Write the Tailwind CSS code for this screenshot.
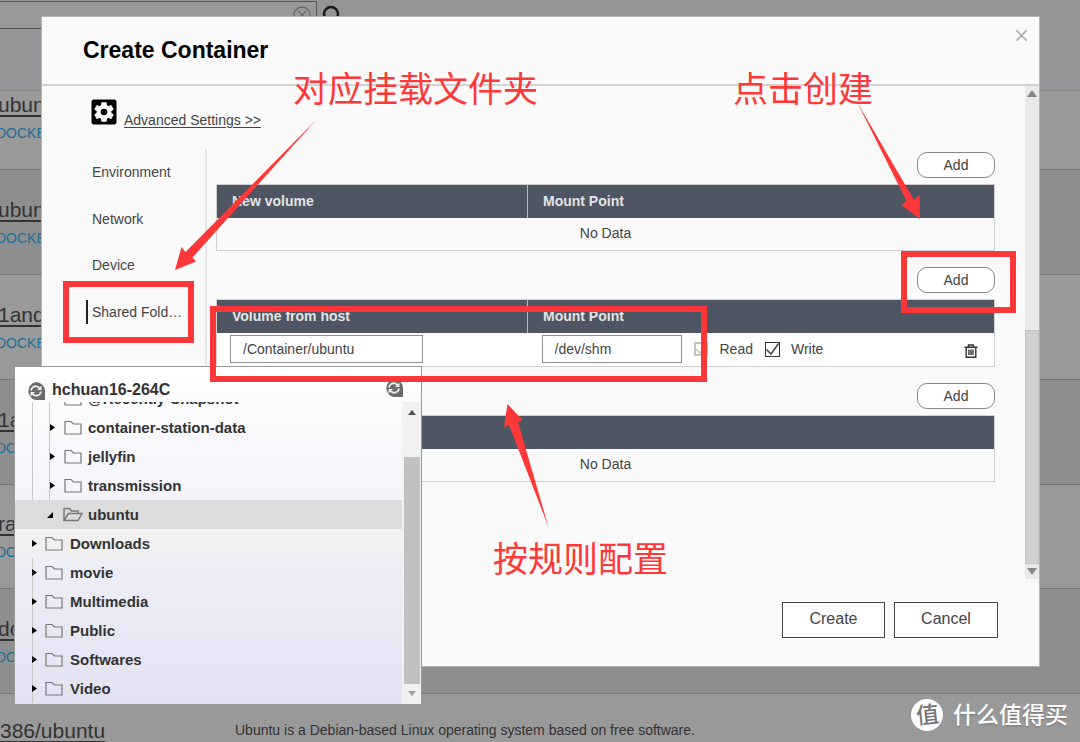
<!DOCTYPE html>
<html lang="en">
<head>
<meta charset="utf-8">
<meta name="viewport" content="width=device-width, initial-scale=1">
<title>Create Container</title>
<script src="https://cdn.jsdelivr.net/npm/@tailwindcss/browser@4"></script>
</head>
<body class="bg-[#999999] font-['Liberation_Sans','Noto_Sans_CJK_SC',sans-serif] text-sm text-[#444444]">
<svg class="hidden" aria-hidden="true">
  <symbol id="folder" viewBox="0 0 18 15"><path d="M1 1.500h6l2.500 2.500H17v10H1z" fill="none" stroke="#777" stroke-width="1.200"/></symbol>
  <symbol id="folder-open" viewBox="0 0 20 15"><path d="M1 13.500V1.500h5.500l2 2.500H15v2.500M1 13.500l4.500-7H19l-4 7z" fill="none" stroke="#777" stroke-width="1.400"/></symbol>
  <symbol id="refresh" viewBox="0 0 18 18"><path d="M9 0a9 9 0 0 1 9 9v9h-6A9 9 0 1 1 9 0z" fill="#6b6b6b"/><path d="M4 8.500C4.500 5.500 7 4 9.500 4.300c1.500.2 2.500.9 3.300 2M14 9.500c-.5 3-3 4.500-5.500 4.200-1.500-.2-2.500-.9-3.300-2" fill="none" stroke="#eee" stroke-width="1.800"/><path d="M14.500 3.500v4.500h-4.500zM3.500 14.500V10H8z" fill="#eee"/></symbol>
</svg>

<div class="relative h-screen overflow-hidden">
  <!-- Image list behind the dialog -->
  <main>
    <header class="flex h-[90px] items-start bg-[#959597]">
      <div class="mt-px flex h-7 w-[317px] items-center border border-l-0 border-[#555] bg-[#999] pr-1">
        <input type="search" aria-label="Search images" class="min-w-0 flex-1 bg-transparent outline-none">
        <button type="button" aria-label="Clear search"><svg class="size-5" viewBox="0 0 20 20" fill="none" stroke="#666" stroke-width="1.300"><circle cx="10" cy="10" r="8"/><path d="M6 6l8 8M14 6l-8 8"/></svg></button>
      </div>
      <button type="button" aria-label="Search" class="mt-1 ml-1"><svg class="size-6" viewBox="0 0 24 24" fill="none" stroke="#1a1a1a" stroke-width="2.500"><circle cx="10" cy="10" r="7"/><path d="M15 15l6 6"/></svg></button>
    </header>
    <ul class="text-[#333]">
      <li class="flex h-[79px] flex-col items-start justify-end gap-2 border-t border-[#868686] bg-[#999] pb-[26px]"><a href="#" class="-ml-0.5 text-[21px] leading-5 underline underline-offset-3">ubun</a><span class="-ml-1 leading-5 text-[#1c6f96]">DOCKE</span></li>
      <li class="flex h-[105px] flex-col items-start justify-end gap-2 border-t border-[#777] bg-[#8e8e8e] pb-[26px]"><a href="#" class="-ml-0.5 text-[21px] leading-5 underline underline-offset-3">ubun</a><span class="-ml-1 leading-5 text-[#1c6f96]">DOCKE</span></li>
      <li class="flex h-[105px] flex-col items-start justify-end gap-2 border-t border-[#777] bg-[#999] pb-[26px]"><a href="#" class="-ml-0.5 text-[21px] leading-5 underline underline-offset-3">1and</a><span class="-ml-1 leading-5 text-[#1c6f96]">DOCKE</span></li>
      <li class="flex h-[105px] flex-col items-start justify-end gap-2 border-t border-[#777] bg-[#8e8e8e] pb-[26px]"><a href="#" class="-ml-0.5 text-[21px] leading-5 underline underline-offset-3">1a</a><span class="-ml-1 leading-5 text-[#1c6f96]">DO</span></li>
      <li class="flex h-[104px] flex-col items-start justify-end gap-2 border-t border-[#777] bg-[#999] pb-[26px]"><a href="#" class="-ml-0.5 text-[21px] leading-5 underline underline-offset-3">ra</a><span class="-ml-1 leading-5 text-[#1c6f96]">DO</span></li>
      <li class="flex h-[105px] flex-col items-start justify-end gap-2 border-t border-[#777] bg-[#8e8e8e] pb-[26px]"><a href="#" class="-ml-0.5 text-[21px] leading-5 underline underline-offset-3">do</a><span class="-ml-1 leading-5 text-[#1c6f96]">DO</span></li>
      <li class="flex h-[105px] items-start border-t border-[#777] bg-[#999] pt-6"><a href="#" class="w-[235px] shrink-0 pt-px text-[21px] leading-6 underline underline-offset-3">386/ubuntu</a><p class="leading-6">Ubuntu is a Debian-based Linux operating system based on free software.</p></li>
    </ul>
  </main>

  <!-- Dialog -->
  <section role="dialog" aria-labelledby="dialog-title" class="absolute top-4 right-10 left-[41px] border border-[#b4b4b4] bg-[#fafafa]">
    <header class="flex items-start justify-between border-b-2 border-[#d3d3d3] pt-3.5 pr-[11px] pb-[15px] pl-[41px]">
      <h1 id="dialog-title" class="text-[23px] leading-[38px] font-bold text-black">Create Container</h1>
      <button type="button" aria-label="Close" class="-mt-3.5 pt-3"><svg class="size-[13px]" viewBox="0 0 14 14" fill="none" stroke="#b0b0b0" stroke-width="2"><path d="M1.500 1.500l11 11M12.500 1.500l-11 11"/></svg></button>
    </header>

    <div class="flex">
      <div class="min-w-0 flex-1 pt-[13px] pr-[30px] pb-[97px] pl-[50px]">
        <a href="#" class="flex items-end gap-[7px] text-[#444]">
          <svg class="-ml-px size-[26px]" viewBox="0 0 26 26"><rect x=".5" y=".5" width="25" height="25" rx="2" fill="#000"/><g fill="#fff"><circle cx="13" cy="13" r="7.500"/><g><rect x="10.200" y="3.200" width="5.600" height="19.600" rx="1"/><rect x="10.200" y="3.200" width="5.600" height="19.600" rx="1" transform="rotate(60 13 13)"/><rect x="10.200" y="3.200" width="5.600" height="19.600" rx="1" transform="rotate(120 13 13)"/></g></g><circle cx="13" cy="13" r="3.300" fill="#000"/></svg>
          <span class="-mb-[5px] leading-5 underline underline-offset-2">Advanced Settings &gt;&gt;</span>
        </a>
        <div class="mt-6 flex gap-[9px]">
          <nav class="w-[115px] shrink-0 border-r-2 border-[#e6e6e6]">
            <ul>
              <li class="flex h-[46px] items-center"><a href="#">Environment</a></li>
              <li class="flex h-[47px] items-center"><a href="#">Network</a></li>
              <li class="flex h-[46px] items-center"><a href="#">Device</a></li>
              <li class="flex h-[47px] items-center"><a href="#" class="-ml-1.5 border-l-2 border-[#222] pl-1 leading-6">Shared Fold…</a></li>
            </ul>
          </nav>
          <div class="flex min-w-0 flex-1 flex-col gap-4 pt-[3px]">
            <section class="flex flex-col gap-1.5">
              <button type="button" class="h-[26px] w-[78px] self-end rounded-[10px] border border-[#888] bg-white">Add</button>
              <table class="w-full table-fixed border-collapse border border-[#d0d0d0]">
                <thead class="bg-[#4e5563] text-left text-[#e4e4e4]"><tr class="h-[33px]"><th class="w-[311px] border-r border-[#bbb] pl-[15px]">New volume</th><th class="pl-[15px]">Mount Point</th></tr></thead>
                <tbody><tr class="h-[33px]"><td colspan="2" class="pb-0.5 text-center">No Data</td></tr></tbody>
              </table>
            </section>
            <section class="flex flex-col gap-1.5">
              <button type="button" class="h-[26px] w-[78px] self-end rounded-[10px] border border-[#888] bg-white">Add</button>
              <table class="w-full table-fixed border-collapse border border-[#d0d0d0]">
                <thead class="bg-[#4e5563] text-left text-[#e4e4e4]"><tr class="h-[33px]"><th class="w-[311px] border-r border-[#bbb] pl-[15px]">Volume from host</th><th class="pl-[15px]">Mount Point</th></tr></thead>
                <tbody class="bg-white"><tr class="h-[34px]">
                  <td class="pl-[13px]"><input type="text" aria-label="Volume from host" value="/Container/ubuntu" class="h-7 w-[193px] border border-[#8f8f8f] bg-white px-3"></td>
                  <td class="pl-[14px]"><div class="flex items-center">
                    <input type="text" aria-label="Mount Point" value="/dev/shm" class="h-7 w-[140px] border border-[#8f8f8f] bg-white px-3">
                    <label class="relative ml-3 flex items-center gap-3"><input type="checkbox" checked disabled class="size-[14px] appearance-none border-2 border-[#c4c4c4]"><svg class="absolute left-0 size-[14px]" viewBox="0 0 14 14" fill="none" stroke="#c4c4c4" stroke-width="1.500"><path d="M2 7l4 4 7-9"/></svg>Read</label>
                    <label class="relative ml-3 flex items-center gap-[11px]"><input type="checkbox" checked class="size-[15px] appearance-none border border-[#333]"><svg class="absolute left-0 size-[15px]" viewBox="0 0 15 15" fill="none" stroke="#444" stroke-width="1.500"><path d="M1.500 7.500l4.500 4.500 7.500-10.500"/></svg>Write</label>
                    <button type="button" aria-label="Delete" class="mr-4 ml-auto pt-1"><svg class="size-[14px]" viewBox="0 0 14 14" fill="none" stroke="#333" stroke-width="1.400"><path d="M.5 3.200h13M4.500 3V1h5v2M2.200 3.500v9.700h9.600V3.500M5 5.500v5.500M7 5.500v5.500M9 5.500v5.500"/></svg></button>
                  </div></td>
                </tr></tbody>
              </table>
            </section>
            <section class="flex flex-col gap-1.5">
              <button type="button" class="h-[26px] w-[78px] self-end rounded-[10px] border border-[#888] bg-white">Add</button>
              <table class="w-full table-fixed border-collapse border border-[#d0d0d0]">
                <thead class="bg-[#4e5563] text-left text-[#e4e4e4]"><tr class="h-[33px]"><th></th></tr></thead>
                <tbody><tr class="h-[33px]"><td class="pb-0.5 text-center">No Data</td></tr></tbody>
              </table>
            </section>
          </div>
        </div>
      </div>
      <div class="flex w-[14px] flex-col items-center bg-[#e9e9e9]" aria-hidden="true">
        <svg class="mt-1 h-[7px] w-[10px]" viewBox="0 0 10 7"><path d="M5 0l5 7H0z" fill="#888"/></svg>
        <div class="mt-[233px] w-full flex-1 border border-[#c4c4c4] bg-[#d0d0d0]"></div>
        <svg class="my-1 h-[7px] w-[10px]" viewBox="0 0 10 7"><path d="M0 0h10L5 7z" fill="#888"/></svg>
      </div>
    </div>

    <footer class="flex justify-end gap-[9px] px-[41px] pt-[23px] pb-7 text-base">
      <button type="button" class="h-9 w-[103px] border border-[#444] bg-white pb-0.5">Create</button>
      <button type="button" class="h-9 w-[104px] border border-[#444] bg-white pb-0.5">Cancel</button>
    </footer>
  </section>

  <!-- Folder picker -->
  <section aria-label="Folder picker" class="absolute top-[366px] left-[14px] w-[408px] border border-[#999] bg-linear-to-b from-white to-[#e2e2f2] text-[15px] font-bold text-[#333]">
    <header class="flex h-[35px] items-center gap-[7px] pr-[18px] pl-3 text-base">
      <svg class="mt-3 size-[18px]"><use href="#refresh"/></svg>
      <span class="mt-2.5 flex-1">hchuan16-264C</span>
      <button type="button" aria-label="Refresh" class="mt-1.5"><svg class="size-[18px]"><use href="#refresh"/></svg></button>
    </header>
    <div class="flex">
      <div class="h-[302px] min-w-0 flex-1 overflow-hidden">
        <ul class="-mt-[18px]">
          <li class="ml-[17px] border-l border-[#c8c8c8]"><ul class="ml-4 border-l border-[#c8c8c8]">
            <li class="flex h-[29px] items-center"><svg class="-ml-px size-[7px]" viewBox="0 0 7 7"><path d="M1 0l5 3.500L1 7z"/></svg><svg class="ml-2 h-[15px] w-[18px]"><use href="#folder"/></svg><span class="ml-1.5">@Recently-Snapshot</span></li>
            <li class="flex h-[29px] items-center"><svg class="-ml-px size-[7px]" viewBox="0 0 7 7"><path d="M1 0l5 3.500L1 7z"/></svg><svg class="ml-2 h-[15px] w-[18px]"><use href="#folder"/></svg><span class="ml-1.5">container-station-data</span></li>
            <li class="flex h-[29px] items-center"><svg class="-ml-px size-[7px]" viewBox="0 0 7 7"><path d="M1 0l5 3.500L1 7z"/></svg><svg class="ml-2 h-[15px] w-[18px]"><use href="#folder"/></svg><span class="ml-1.5">jellyfin</span></li>
            <li class="flex h-[29px] items-center"><svg class="-ml-px size-[7px]" viewBox="0 0 7 7"><path d="M1 0l5 3.500L1 7z"/></svg><svg class="ml-2 h-[15px] w-[18px]"><use href="#folder"/></svg><span class="ml-1.5">transmission</span></li>
          </ul></li>
          <li class="flex h-[29px] items-center bg-[#dcdcdc] pl-8"><svg class="size-[6px]" viewBox="0 0 6 6"><path d="M6 0v6H0z"/></svg><svg class="ml-[10px] h-[15px] w-[20px]"><use href="#folder-open"/></svg><span class="ml-[5px]">ubuntu</span></li>
          <li class="flex h-[29px] items-center bg-[#f1f1f1] pl-4"><svg class="size-[7px]" viewBox="0 0 7 7"><path d="M1 0l5 3.500L1 7z"/></svg><svg class="ml-[7px] h-[15px] w-[18px]"><use href="#folder"/></svg><span class="ml-[7px]">Downloads</span></li>
          <li class="ml-[17px] border-l border-[#c8c8c8]"><ul>
            <li class="flex h-[29px] items-center"><svg class="-ml-0.5 size-[7px]" viewBox="0 0 7 7"><path d="M1 0l5 3.500L1 7z"/></svg><svg class="ml-[7px] h-[15px] w-[18px]"><use href="#folder"/></svg><span class="ml-[7px]">movie</span></li>
            <li class="flex h-[29px] items-center"><svg class="-ml-0.5 size-[7px]" viewBox="0 0 7 7"><path d="M1 0l5 3.500L1 7z"/></svg><svg class="ml-[7px] h-[15px] w-[18px]"><use href="#folder"/></svg><span class="ml-[7px]">Multimedia</span></li>
            <li class="flex h-[29px] items-center"><svg class="-ml-0.5 size-[7px]" viewBox="0 0 7 7"><path d="M1 0l5 3.500L1 7z"/></svg><svg class="ml-[7px] h-[15px] w-[18px]"><use href="#folder"/></svg><span class="ml-[7px]">Public</span></li>
            <li class="flex h-[29px] items-center"><svg class="-ml-0.5 size-[7px]" viewBox="0 0 7 7"><path d="M1 0l5 3.500L1 7z"/></svg><svg class="ml-[7px] h-[15px] w-[18px]"><use href="#folder"/></svg><span class="ml-[7px]">Softwares</span></li>
            <li class="flex h-[29px] items-center"><svg class="-ml-0.5 size-[7px]" viewBox="0 0 7 7"><path d="M1 0l5 3.500L1 7z"/></svg><svg class="ml-[7px] h-[15px] w-[18px]"><use href="#folder"/></svg><span class="ml-[7px]">Video</span></li>
          </ul></li>
        </ul>
      </div>
      <div class="flex w-[19px] flex-col items-center bg-[#f1f1f1]" aria-hidden="true">
        <svg class="mt-2 h-[5px] w-2" viewBox="0 0 8 5"><path d="M4 0l4 5H0z" fill="#505050"/></svg>
        <div class="mt-[42px] w-4 flex-1 bg-[#c1c1c1]"></div>
        <svg class="mt-[7px] mb-2 h-[5px] w-2" viewBox="0 0 8 5"><path d="M0 0h8L4 5z" fill="#a0a0a0"/></svg>
      </div>
    </div>
  </section>

  <!-- Red annotations drawn over the dialog -->
  <div class="absolute top-[281px] left-[63px] h-[62px] w-[131px] border-6 border-[#fe3838]"></div>
  <div class="absolute top-[306px] left-[210px] h-[76px] w-[497px] border-6 border-[#fe3838]"></div>
  <div class="absolute top-[251px] left-[901px] h-[62px] w-[115px] border-6 border-[#fe3838]"></div>
  <svg class="pointer-events-none absolute top-0 left-0 h-[742px] w-[1080px]" viewBox="0 0 1080 742" fill="#fe3838" aria-hidden="true">
    <path d="M317 119L192.500 257.500l3.500 4-21 8.500 6.500-23 4 5z"/>
    <path d="M857 102l57 98 5.500-5 .5 24-18.500-14 5-4z"/>
    <path d="M548.500 527L518 422l4.500-2-15-16-3.500 23 5-2z"/>
  </svg>
  <p class="absolute top-[65px] left-[293px] text-[35px] leading-[50px] whitespace-nowrap text-[#fe3838]">对应挂载文件夹</p>
  <p class="absolute top-[65px] left-[733px] text-[35px] leading-[50px] whitespace-nowrap text-[#fe3838]">点击创建</p>
  <p class="absolute top-[535px] left-[493px] text-[35px] leading-[50px] whitespace-nowrap text-[#fe3838]">按规则配置</p>

  <div class="absolute right-3 bottom-[11px] flex items-center gap-2.5 text-[23px] leading-8 font-medium text-white text-shadow-sm">
    <span class="flex size-8 items-center justify-center rounded-full bg-white text-[#777] text-shadow-none"><span class="-rotate-6">值</span></span>
    <span>什么值得买</span>
  </div>
</div>
</body>
</html>
